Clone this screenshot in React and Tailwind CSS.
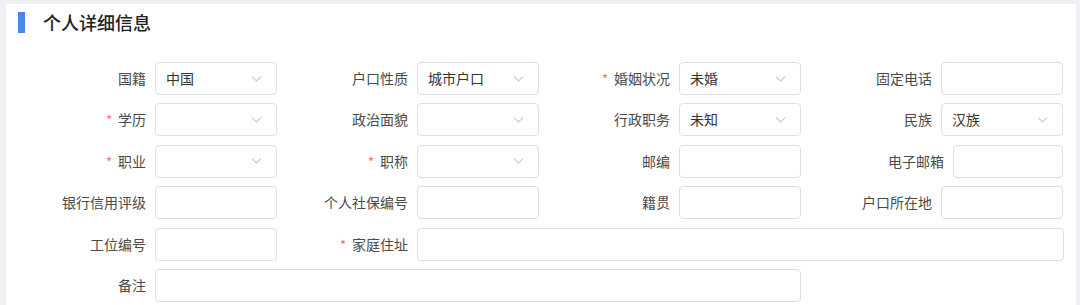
import React from "react";

const font = { fontFamily: '"Noto Sans CJK SC", "Noto Sans", sans-serif' };

function Chevron() {
  return (
    <svg width="11" height="7" viewBox="0 0 11 7" className="absolute right-[14px] top-1/2 -translate-y-1/2">
      <path d="M1 1.2 L5.5 5.5 L10 1.2" fill="none" stroke="#c6c9cf" strokeWidth="1.1" />
    </svg>
  );
}

function Field({ label, required, value, select, labelW, inputW }) {
  return (
    <div className="flex items-center h-[33px] shrink-0">
      <div
        className="flex items-center justify-end pr-[9px] text-[14px] text-[#4a4a4a] whitespace-nowrap"
        style={{ width: labelW }}
      >
        {required && <span className="text-[#f56c6c] text-[13px] mr-[6px] leading-none">*</span>}
        <span>{label}</span>
      </div>
      <div
        className="relative h-[33px] rounded-[4px] border border-[#dcdfe6] bg-white flex items-center pl-[10px] text-[14px] text-[#333]"
        style={{ width: inputW }}
      >
        {value}
        {select && <Chevron />}
      </div>
    </div>
  );
}

export default function App() {
  return (
    <div className="w-[1080px] h-[305px] bg-[#eef0f3] pt-[4px] pl-[6px] pr-[4px] overflow-hidden" style={font}>
      <div className="bg-white h-[301px]">
        <div className="flex items-center pl-[12px] pt-[8px]">
          <div className="w-[7px] h-[21px] bg-[#4a86e8]" />
          <div className="ml-[18px] text-[18px] font-medium text-[#222] leading-[21px]">个人详细信息</div>
        </div>
        <div className="flex flex-col gap-[8.4px] mt-[29px]">
          <div className="flex">
            <Field label="国籍" value="中国" select labelW={149} inputW={122} />
            <Field label="户口性质" value="城市户口" select labelW={140} inputW={122} />
            <Field label="婚姻状况" required value="未婚" select labelW={140} inputW={122} />
            <Field label="固定电话" labelW={140} inputW={122} />
          </div>
          <div className="flex">
            <Field label="学历" required select labelW={149} inputW={122} />
            <Field label="政治面貌" select labelW={140} inputW={122} />
            <Field label="行政职务" value="未知" select labelW={140} inputW={122} />
            <Field label="民族" value="汉族" select labelW={140} inputW={122} />
          </div>
          <div className="flex">
            <Field label="职业" required select labelW={149} inputW={122} />
            <Field label="职称" required select labelW={140} inputW={122} />
            <Field label="邮编" labelW={140} inputW={122} />
            <Field label="电子邮箱" labelW={152} inputW={110} />
          </div>
          <div className="flex">
            <Field label="银行信用评级" labelW={149} inputW={122} />
            <Field label="个人社保编号" labelW={140} inputW={122} />
            <Field label="籍贯" labelW={140} inputW={122} />
            <Field label="户口所在地" labelW={140} inputW={122} />
          </div>
          <div className="flex">
            <Field label="工位编号" labelW={149} inputW={122} />
            <Field label="家庭住址" required labelW={140} inputW={647} />
          </div>
          <div className="flex">
            <Field label="备注" labelW={149} inputW={646} />
          </div>
        </div>
      </div>
    </div>
  );
}
